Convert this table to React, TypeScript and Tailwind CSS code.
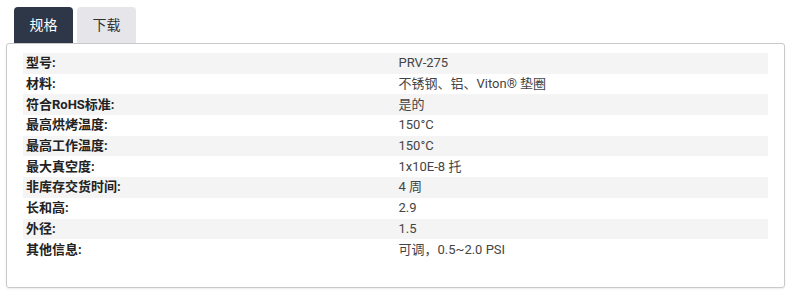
const specs: [string, string][] = [
  ["型号:", "PRV-275"],
  ["材料:", "不锈钢、铝、Viton® 垫圈"],
  ["符合RoHS标准:", "是的"],
  ["最高烘烤温度:", "150°C"],
  ["最高工作温度:", "150°C"],
  ["最大真空度:", "1x10E-8 托"],
  ["非库存交货时间:", "4 周"],
  ["长和高:", "2.9"],
  ["外径:", "1.5"],
  ["其他信息:", "可调，0.5~2.0 PSI"],
];

export default function App() {
  return (
    <div className="w-[800px] h-[295px] bg-white font-['Roboto','Noto_Sans_CJK_SC',sans-serif]">
      <div className="flex pl-[14px] pt-[7px] gap-[4px]">
        <div className="w-[59px] h-[36px] rounded-t-[4px] bg-[#2e3748] text-white text-[14px] flex items-center justify-center">
          规格
        </div>
        <div className="w-[59px] h-[36px] rounded-t-[4px] bg-[#e6e6ea] text-[#333] text-[14px] flex items-center justify-center">
          下载
        </div>
      </div>
      <div className="ml-[6px] w-[779px] h-[245px] border border-[#c9c9c9] rounded-[3px] shadow-[0_1px_2px_rgba(0,0,0,0.08)] pt-[9px] px-[16px]">
        <table className="w-[745px] border-collapse text-[13px]">
          <tbody>
            {specs.map(([k, v], i) => (
              <tr key={k} className={i % 2 === 0 ? "bg-[#f4f4f4]" : "bg-white"}>
                <td className="w-1/2 h-[20.7px] px-[3px] py-0 font-bold text-[#222] leading-[20px]">{k}</td>
                <td className="w-1/2 h-[20.7px] px-[3px] py-0 text-[#444] leading-[20px]">{v}</td>
              </tr>
            ))}
          </tbody>
        </table>
      </div>
    </div>
  );
}
